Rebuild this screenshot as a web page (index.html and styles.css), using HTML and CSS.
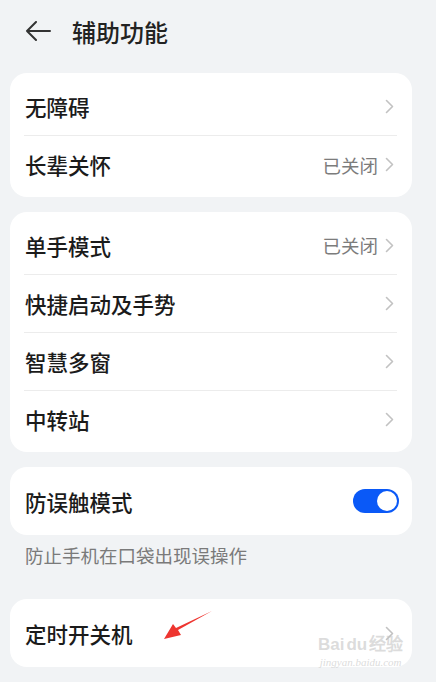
FILE: index.html
```html
<!DOCTYPE html>
<html lang="zh-CN">
<head>
    <meta charset="UTF-8">
    <meta name="viewport" content="width=device-width, initial-scale=1.0">
    <title>辅助功能</title>
    <link rel="stylesheet" href="styles.css">
</head>
<body>
    <div class="page">
        <header class="header">
            <svg class="back" width="26" height="20" viewBox="0 0 26 20">
                <path d="M25 10H2M11 1L2 10l9 9" fill="none" stroke="#333" stroke-width="2" stroke-linecap="round" stroke-linejoin="round"/>
            </svg>
            <h1>辅助功能</h1>
        </header>

        <div class="card">
            <div class="row">
                <span class="label">无障碍</span>
                <span class="right"><svg class="chev" width="9" height="15" viewBox="0 0 9 15"><path d="M1.5 1.5l6 6-6 6" fill="none" stroke="#c2c2c2" stroke-width="1.6" stroke-linecap="round" stroke-linejoin="round"/></svg></span>
            </div>
            <div class="row">
                <span class="label">长辈关怀</span>
                <span class="right"><span class="value">已关闭</span><svg class="chev" width="9" height="15" viewBox="0 0 9 15"><path d="M1.5 1.5l6 6-6 6" fill="none" stroke="#c2c2c2" stroke-width="1.6" stroke-linecap="round" stroke-linejoin="round"/></svg></span>
            </div>
        </div>

        <div class="card">
            <div class="row">
                <span class="label">单手模式</span>
                <span class="right"><span class="value">已关闭</span><svg class="chev" width="9" height="15" viewBox="0 0 9 15"><path d="M1.5 1.5l6 6-6 6" fill="none" stroke="#c2c2c2" stroke-width="1.6" stroke-linecap="round" stroke-linejoin="round"/></svg></span>
            </div>
            <div class="row">
                <span class="label">快捷启动及手势</span>
                <span class="right"><svg class="chev" width="9" height="15" viewBox="0 0 9 15"><path d="M1.5 1.5l6 6-6 6" fill="none" stroke="#c2c2c2" stroke-width="1.6" stroke-linecap="round" stroke-linejoin="round"/></svg></span>
            </div>
            <div class="row">
                <span class="label">智慧多窗</span>
                <span class="right"><svg class="chev" width="9" height="15" viewBox="0 0 9 15"><path d="M1.5 1.5l6 6-6 6" fill="none" stroke="#c2c2c2" stroke-width="1.6" stroke-linecap="round" stroke-linejoin="round"/></svg></span>
            </div>
            <div class="row">
                <span class="label">中转站</span>
                <span class="right"><svg class="chev" width="9" height="15" viewBox="0 0 9 15"><path d="M1.5 1.5l6 6-6 6" fill="none" stroke="#c2c2c2" stroke-width="1.6" stroke-linecap="round" stroke-linejoin="round"/></svg></span>
            </div>
        </div>

        <div class="card">
            <div class="row tall">
                <span class="label">防误触模式</span>
                <span class="toggle"><span class="knob"></span></span>
            </div>
        </div>
        <p class="caption">防止手机在口袋出现误操作</p>

        <div class="card last">
            <div class="row tall">
                <span class="label">定时开关机</span>
                <span class="right"><svg class="chev" width="9" height="15" viewBox="0 0 9 15"><path d="M1.5 1.5l6 6-6 6" fill="none" stroke="#c2c2c2" stroke-width="1.6" stroke-linecap="round" stroke-linejoin="round"/></svg></span>
            </div>
            <!-- red annotation arrow -->
            <svg class="mark" width="52" height="34" viewBox="0 0 52 34">
                <path d="M50 2L16 21l3 5L2 30l9-15 3 4z" fill="#ee3530"/>
            </svg>
            <div class="watermark">
                <span class="wm-logo">Bai<span class="wm-du">du</span>经验</span>
                <span class="wm-url">jingyan.baidu.com</span>
            </div>
        </div>
    </div>
</body>
</html>
```

FILE: styles.css
```css
body {
    margin: 0;
    padding: 0;
    background: #f1f3f5;
    font-family: 'Noto Sans CJK SC', 'Noto Sans', sans-serif;
    color: #1b1b1b;
}
.page {
    width: 436px;
    height: 682px;
    overflow: hidden;
}
.header {
    display: flex;
    align-items: center;
    height: 34px;
    padding: 14px 0 25px 25px;
}
.back {
    margin-right: 21px;
}
h1 {
    margin: 0;
    font-size: 24px;
    font-weight: 500;
    color: #222;
}
.card {
    position: relative;
    margin: 0 24px 15px 10px;
    padding: 4px 0;
    background: #fff;
    border-radius: 17px;
}
.row {
    display: flex;
    align-items: center;
    justify-content: space-between;
    height: 58px;
    margin: 0 15px 0 14px;
    padding-left: 1px;
    border-top: 1px solid #ececec;
    box-sizing: border-box;
}
.row:first-child {
    border-top: none;
}
.row.tall {
    height: 60px;
}
.label {
    font-size: 21.5px;
    font-weight: 500;
}
.right {
    display: flex;
    align-items: center;
}
.value {
    font-size: 18.5px;
    color: #7c7c7c;
    margin-right: 7px;
}
.chev {
    margin-right: 3px;
}
.toggle {
    position: relative;
    width: 46px;
    height: 24px;
    border-radius: 12px;
    background: #0a59f7;
    margin-right: -2px;
}
.knob {
    position: absolute;
    right: 2px;
    top: 2px;
    width: 20px;
    height: 20px;
    border-radius: 50%;
    background: #fff;
}
.caption {
    margin: -7px 0 0;
    padding: 0 25px;
    line-height: 24px;
    font-size: 18.5px;
    color: #7a7a7a;
}
.card.last {
    margin-top: 32px;
}
.mark {
    position: absolute;
    left: 152px;
    top: 10px;
}
.watermark {
    position: absolute;
    left: 308px;
    top: 36px;
    display: flex;
    flex-direction: column;
    align-items: center;
    color: rgba(190, 190, 190, 0.55);
}
.wm-logo {
    font-family: 'Liberation Sans', sans-serif;
    font-size: 17px;
    font-weight: bold;
    line-height: 20px;
}
.wm-du {
    margin: 0 2px;
}
.wm-url {
    font-family: 'Liberation Serif', serif;
    font-size: 11px;
    font-style: italic;
    line-height: 14px;
}
```
